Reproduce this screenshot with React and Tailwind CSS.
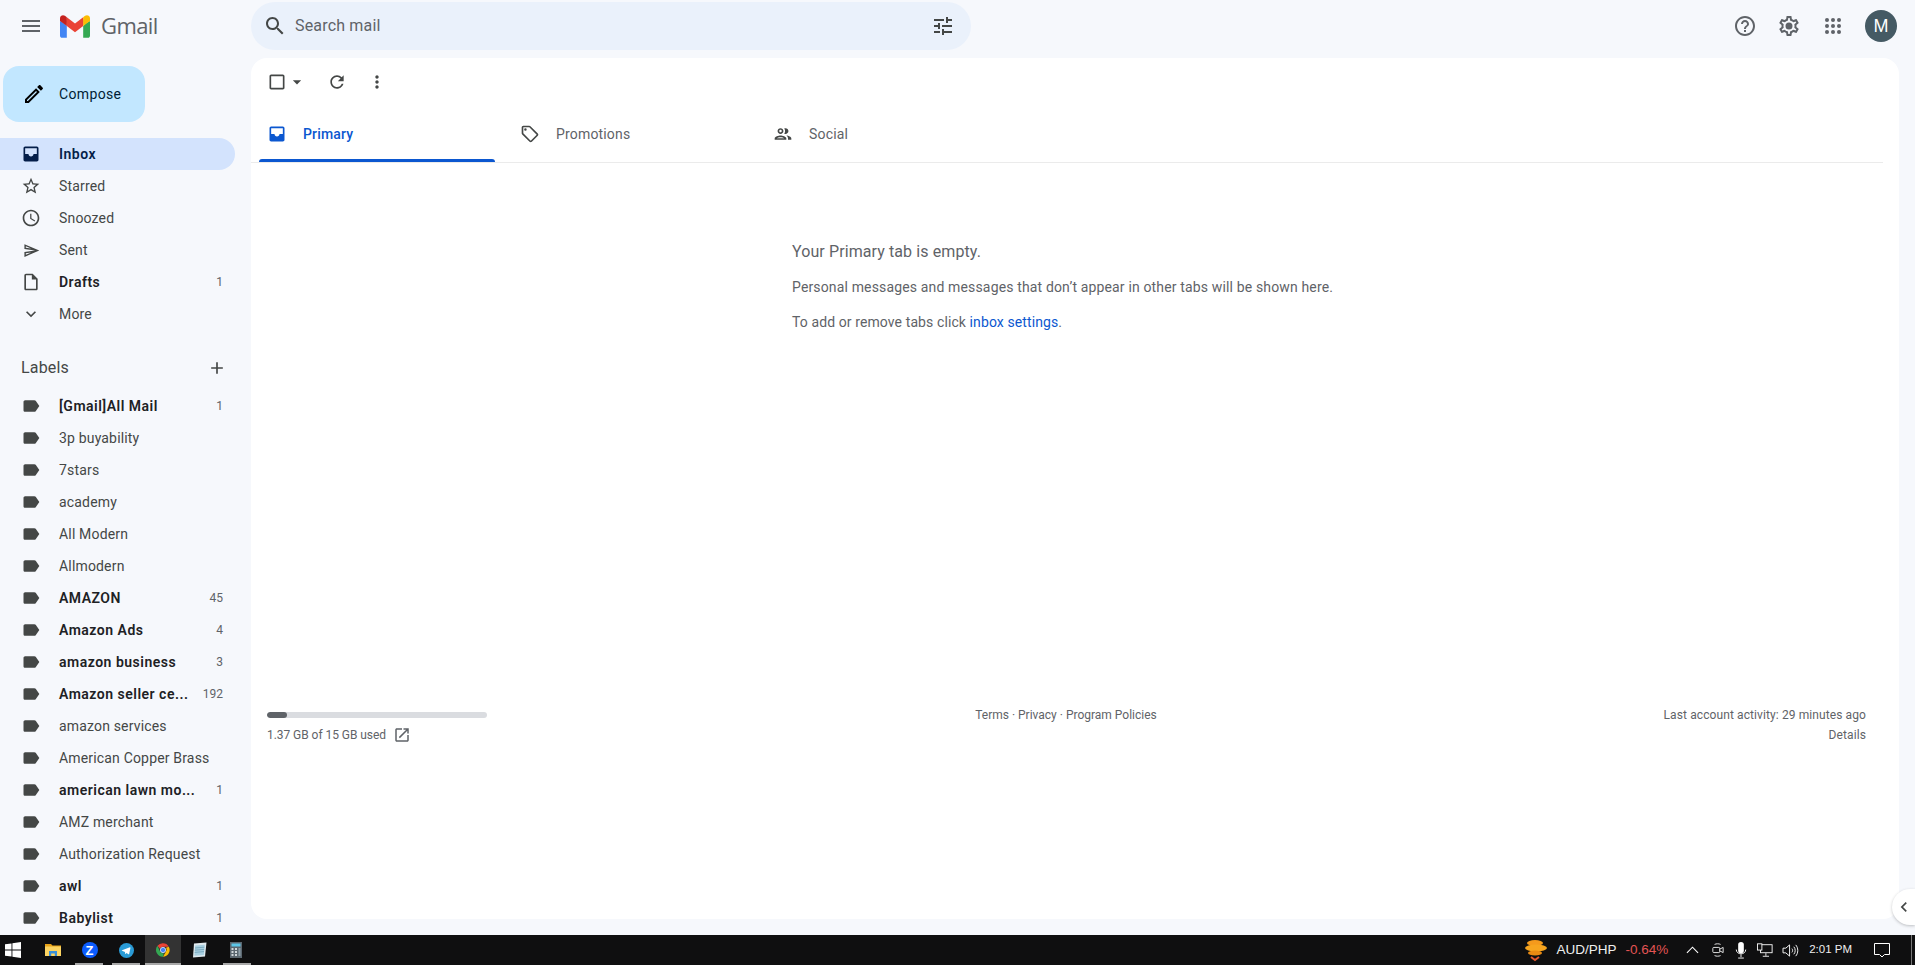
const paths = {
  menu: "M3 18h18v-2H3v2zm0-5h18v-2H3v2zm0-7v2h18V6H3z",
  search:
    "M15.5 14h-.79l-.28-.27C15.41 12.59 16 11.11 16 9.5 16 5.91 13.09 3 9.5 3S3 5.91 3 9.5 5.91 16 9.5 16c1.61 0 3.09-.59 4.23-1.57l.27.28v.79l5 4.99L20.49 19l-4.99-5zm-6 0C7.01 14 5 11.99 5 9.5S7.01 5 9.5 5 14 7.01 14 9.5 11.99 14 9.5 14z",
  tune: "M3 17v2h6v-2H3zM3 5v2h10V5H3zm10 16v-2h8v-2h-8v-2h-2v6h2zM7 9v2H3v2h4v2h2V9H7zm14 4v-2H11v2h10zm-6-4h2V7h4V5h-4V3h-2v6z",
  help: "M11 18h2v-2h-2v2zm1-16C6.48 2 2 6.48 2 12s4.48 10 10 10 10-4.48 10-10S17.52 2 12 2zm0 18c-4.41 0-8-3.59-8-8s3.59-8 8-8 8 3.59 8 8-3.59 8-8 8zm0-14c-2.21 0-4 1.79-4 4h2c0-1.1.9-2 2-2s2 .9 2 2c0 2-3 1.75-3 5h2c0-2.25 3-2.5 3-5 0-2.21-1.79-4-4-4z",
  gear: "M19.43 12.98c.04-.32.07-.64.07-.98 0-.34-.03-.66-.07-.98l2.11-1.65c.19-.15.24-.42.12-.64l-2-3.46c-.09-.16-.26-.25-.44-.25-.06 0-.12.01-.17.03l-2.49 1c-.52-.4-1.08-.73-1.69-.98l-.38-2.65C14.46 2.18 14.25 2 14 2h-4c-.25 0-.46.18-.49.42l-.38 2.65c-.61.25-1.17.59-1.69.98l-2.49-1c-.06-.02-.12-.03-.18-.03-.17 0-.34.09-.43.25l-2 3.46c-.13.22-.07.49.12.64l2.11 1.65c-.04.32-.07.65-.07.98 0 .33.03.66.07.98l-2.11 1.65c-.19.15-.24.42-.12.64l2 3.46c.09.16.26.25.44.25.06 0 .12-.01.17-.03l2.49-1c.52.4 1.08.73 1.69.98l.38 2.65c.03.24.24.42.49.42h4c.25 0 .46-.18.49-.42l.38-2.65c.61-.25 1.17-.59 1.69-.98l2.49 1c.06.02.12.03.18.03.17 0 .34-.09.43-.25l2-3.46c.12-.22.07-.49-.12-.64l-2.11-1.65zm-1.98-1.71c.04.31.05.52.05.73 0 .21-.02.43-.05.73l-.14 1.13.89.7 1.08.84-.7 1.21-1.27-.51-1.04-.42-.9.68c-.43.32-.84.56-1.25.73l-1.06.43-.16 1.13-.2 1.35h-1.4l-.19-1.35-.16-1.13-1.06-.43c-.43-.18-.83-.41-1.23-.71l-.91-.7-1.06.43-1.27.51-.7-1.21 1.08-.84.89-.7-.14-1.13c-.03-.31-.05-.54-.05-.74s.02-.43.05-.73l.14-1.13-.89-.7-1.08-.84.7-1.21 1.27.51 1.04.42.9-.68c.43-.32.84-.56 1.25-.73l1.06-.43.16-1.13.2-1.35h1.39l.19 1.35.16 1.13 1.06.43c.43.18.83.41 1.23.71l.91.7 1.06-.43 1.27-.51.7 1.21-1.07.85-.89.7.14 1.13zM12 8.5a3.5 3.5 0 1 0 0 7 3.5 3.5 0 0 0 0-7z",
  pen: "M14.06 9.02l.92.92L5.92 19H5v-.92l9.06-9.06M17.66 3c-.25 0-.51.1-.7.29l-1.83 1.83 3.75 3.75 1.83-1.83c.39-.39.39-1.02 0-1.41l-2.34-2.34c-.2-.2-.45-.29-.71-.29zm-3.6 3.19L3 17.25V21h3.75L17.81 9.94l-3.75-3.75z",
  inbox:
    "M19 3H4.99c-1.11 0-1.98.89-1.98 2L3 19c0 1.1.88 2 1.99 2H19c1.1 0 2-.9 2-2V5c0-1.11-.9-2-2-2zm0 9h-4c0 1.66-1.35 3-3 3s-3-1.34-3-3H4.99V5H19v7z",
  star: "M22 9.24l-7.19-.62L12 2 9.19 8.63 2 9.24l5.46 4.73L5.82 21 12 17.27 18.18 21l-1.63-7.03L22 9.24zM12 15.4l-3.76 2.27 1-4.28-3.32-2.88 4.38-.38L12 6.1l1.71 4.04 4.38.38-3.32 2.88 1 4.28L12 15.4z",
  clock:
    "M11.99 2C6.47 2 2 6.48 2 12s4.47 10 9.99 10C17.52 22 22 17.52 22 12S17.52 2 11.99 2zM12 20c-4.42 0-8-3.58-8-8s3.58-8 8-8 8 3.58 8 8-3.58 8-8 8zm.5-13H11v6l5.25 3.15.75-1.23-4.5-2.67z",
  send: "M4.01 6.03l7.51 3.22-7.52-1 .01-2.22m7.5 8.72L4 17.97v-2.22l7.51-1M2.01 3L2 10l15 2-15 2 .01 7L23 12 2.01 3z",
  draft:
    "M14 2H6c-1.1 0-1.99.9-1.99 2L4 20c0 1.1.89 2 1.99 2H18c1.1 0 2-.9 2-2V8l-6-6zM6 20V4h7v5h5v11H6z",
  more: "M16.59 8.59L12 13.17 7.41 8.59 6 10l6 6 6-6z",
  add: "M19 13h-6v6h-2v-6H5v-2h6V5h2v6h6v2z",
  label:
    "M17.63 5.84C17.27 5.33 16.67 5 16 5L5 5.01C3.9 5.01 3 5.9 3 7v10c0 1.1.9 1.99 2 1.99L16 19c.67 0 1.27-.33 1.63-.84L22 12l-4.37-6.16z",
  check:
    "M19 5v14H5V5h14m0-2H5c-1.1 0-2 .9-2 2v14c0 1.1.9 2 2 2h14c1.1 0 2-.9 2-2V5c0-1.1-.9-2-2-2z",
  caret: "M7 10l5 5 5-5z",
  refresh:
    "M17.65 6.35C16.2 4.9 14.21 4 12 4c-4.42 0-7.99 3.58-7.99 8s3.57 8 7.99 8c3.73 0 6.84-2.55 7.73-6h-2.08c-.82 2.33-3.04 4-5.65 4-3.31 0-6-2.69-6-6s2.69-6 6-6c1.66 0 3.14.69 4.22 1.78L13 11h7V4l-2.35 2.35z",
  dots: "M12 8c1.1 0 2-.9 2-2s-.9-2-2-2-2 .9-2 2 .9 2 2 2zm0 2c-1.1 0-2 .9-2 2s.9 2 2 2 2-.9 2-2-.9-2-2-2zm0 6c-1.1 0-2 .9-2 2s.9 2 2 2 2-.9 2-2-.9-2-2-2z",
  tag: "M21.41 11.41l-8.83-8.83c-.37-.37-.88-.58-1.41-.58H4c-1.1 0-2 .9-2 2v7.17c0 .53.21 1.04.59 1.41l8.83 8.83c.78.78 2.05.78 2.83 0l7.17-7.17c.78-.79.78-2.05-.01-2.83zM12.83 20L4 11.17V4h7.17L20 12.83 12.83 20zM6.5 5a1.5 1.5 0 1 0 0 3 1.5 1.5 0 0 0 0-3z",
  people:
    "M9 13.75c-2.34 0-7 1.17-7 3.5V19h14v-1.75c0-2.33-4.66-3.5-7-3.5zM4.34 17c.84-.58 2.87-1.25 4.66-1.25s3.82.67 4.66 1.25H4.34zM9 12c1.93 0 3.5-1.57 3.5-3.5S10.93 5 9 5 5.5 6.57 5.5 8.5 7.07 12 9 12zm0-5c.83 0 1.5.67 1.5 1.5S9.83 10 9 10s-1.5-.67-1.5-1.5S8.17 7 9 7zm7.04 6.81c1.16.84 1.96 1.96 1.96 3.44V19h4v-1.75c0-2.02-3.5-3.17-5.96-3.44zM15 12c1.93 0 3.5-1.57 3.5-3.5S16.93 5 15 5c-.54 0-1.04.13-1.5.35.63.89 1 1.98 1 3.15s-.37 2.26-1 3.15c.46.22.96.35 1.5.35z",
  external:
    "M19 19H5V5h7V3H5c-1.11 0-2 .9-2 2v14c0 1.1.89 2 2 2h14c1.1 0 2-.9 2-2v-7h-2v7zM14 3v2h3.59l-9.83 9.83 1.41 1.41L19 6.41V10h2V3h-7z",
  chevronLeft: "M15.41 7.41L14 6l-6 6 6 6 1.41-1.41L10.83 12z",
};

const Icon = ({ name, className }) => (
  <svg viewBox="0 0 24 24" className={`fill-current shrink-0 ${className}`}>
    <path d={paths[name]} />
  </svg>
);

const GmailLogo = () => (
  <svg viewBox="0 0 256 193" className="w-[30px] h-[23px] shrink-0">
    <path fill="#4285F4" d="M58.182 192.05V93.14L27.507 65.077 0 49.504v125.091c0 9.658 7.825 17.455 17.455 17.455h40.727Z" />
    <path fill="#34A853" d="M197.818 192.05h40.727c9.659 0 17.455-7.826 17.455-17.455V49.505l-31.156 17.837-27.026 25.798v98.91Z" />
    <path fill="#EA4335" d="m58.182 93.14-4.174-38.647 4.174-36.989L128 69.868l69.818-52.364 4.669 34.992-4.669 40.644L128 145.504z" />
    <path fill="#FBBC04" d="M197.818 17.504V93.14L256 49.504V26.231c0-21.585-24.64-33.89-41.89-20.945l-16.292 12.218Z" />
    <path fill="#C5221F" d="m0 49.504 26.759 20.07L58.182 93.14V17.504L41.89 5.286C24.61-7.66 0 4.646 0 26.23v23.273Z" />
  </svg>
);

const mainNav = [
  { icon: "inbox", text: "Inbox", active: true },
  { icon: "star", text: "Starred" },
  { icon: "clock", text: "Snoozed" },
  { icon: "send", text: "Sent" },
  { icon: "draft", text: "Drafts", count: "1", bold: true },
  { icon: "more", text: "More" },
];

const labels = [
  { text: "[Gmail]All Mail", count: "1", bold: true },
  { text: "3p buyability" },
  { text: "7stars" },
  { text: "academy" },
  { text: "All Modern" },
  { text: "Allmodern" },
  { text: "AMAZON", count: "45", bold: true },
  { text: "Amazon Ads", count: "4", bold: true },
  { text: "amazon business", count: "3", bold: true },
  { text: "Amazon seller ce...", count: "192", bold: true },
  { text: "amazon services" },
  { text: "American Copper Brass" },
  { text: "american lawn mo...", count: "1", bold: true },
  { text: "AMZ merchant" },
  { text: "Authorization Request" },
  { text: "awl", count: "1", bold: true },
  { text: "Babylist", count: "1", bold: true },
];

const NavRow = ({ icon, text, count, bold, active }) => (
  <div
    className={`flex items-center h-8 w-[235px] rounded-r-full pl-[21px] pr-3 text-sm ${
      active
        ? "bg-[#d3e3fd] text-[#041e49] font-semibold tracking-[0.5px]"
        : bold
          ? "text-[#202124] font-semibold tracking-[0.5px]"
          : "text-[#444746]"
    }`}
  >
    <Icon
      name={icon}
      className={`${icon === "send" ? "w-[17px] h-[17px] mx-[1.5px]" : "w-5 h-5"} ${active ? "text-[#041e49]" : "text-[#444746]"}`}
    />
    <span className="ml-[18px] whitespace-nowrap flex-1">{text}</span>
    {count && <span className="ml-3 text-xs font-normal tracking-normal text-[#5f6368]">{count}</span>}
  </div>
);

const Sidebar = () => (
  <aside className="w-[251px] shrink-0 overflow-hidden pt-2">
    <button className="ml-[3px] flex items-center w-[142px] h-14 rounded-2xl bg-[#c2e7ff] pl-[19px] text-sm font-normal tracking-[0.35px] text-[#001d35]">
      <Icon name="pen" className="w-6 h-6 text-black" />
      <span className="ml-[13px]">Compose</span>
    </button>
    <nav className="mt-4">
      {mainNav.map((n) => (
        <NavRow key={n.text} {...n} />
      ))}
    </nav>
    <div className="flex items-center justify-between w-[235px] h-9 mt-5 pl-[21px] pr-[8px] text-base text-[#444746]">
      <span>Labels</span>
      <Icon name="add" className="w-[20px] h-[20px]" />
    </div>
    <div className="mt-1">
      {labels.map((l) => (
        <NavRow key={l.text} icon="label" {...l} />
      ))}
    </div>
  </aside>
);

const Header = () => (
  <header className="flex items-start h-[58px] shrink-0 pt-[2px]">
    <div className="w-[251px] shrink-0 flex items-center h-12 pl-[19px]">
      <Icon name="menu" className="w-6 h-6 text-[#5f6368]" />
      <div className="ml-[17px]">
        <GmailLogo />
      </div>
      <span className="ml-[11px] mb-[2px] text-[22px] text-[#5f6368] font-['Open_Sans',sans-serif] tracking-[-0.6px]">Gmail</span>
    </div>
    <div className="flex items-center w-[720px] h-12 rounded-full bg-[#eaf1fb] pl-3 pr-[16px]">
      <Icon name="search" className="w-6 h-6 text-[#444746]" />
      <span className="ml-[8px] flex-1 text-base text-[#5f6368]">Search mail</span>
      <Icon name="tune" className="w-6 h-6 text-[#444746]" />
    </div>
    <div className="ml-auto flex items-center h-12 pr-[18px] text-[#5f6368]">
      <Icon name="help" className="w-6 h-6" />
      <Icon name="gear" className="w-6 h-6 ml-5" />
      <svg viewBox="0 0 24 24" className="w-6 h-6 ml-5 fill-current">
        {[6, 12, 18].map((y) =>
          [6, 12, 18].map((x) => <circle key={`${x}-${y}`} cx={x} cy={y} r="2" />)
        )}
      </svg>
      <div className="w-8 h-8 ml-[20px] rounded-full bg-[#455a64] text-white text-lg flex items-center justify-center font-['Liberation_Sans',sans-serif]">
        M
      </div>
    </div>
  </header>
);

const Tab = ({ icon, text, active }) => (
  <div className={`relative flex items-center w-[253px] h-14 pl-[8px] text-sm ${active ? "font-medium text-[#0b57d0]" : "text-[#5f6368]"}`}>
    <Icon name={icon} className={`w-[20px] h-[20px] ${active ? "text-[#0b57d0]" : "text-[#444746]"}`} />
    <span className="ml-[16px]">{text}</span>
    {active && <div className="absolute left-0 bottom-0 w-[236px] h-[3px] rounded-t bg-[#0b57d0]" />}
  </div>
);

const Main = () => (
  <main className="flex-1 mb-4 mr-4 bg-white rounded-2xl overflow-hidden text-[#5f6368]">
    {/* toolbar */}
    <div className="flex items-center h-12 pl-4">
      <Icon name="check" className="w-5 h-5 text-[#444746]" />
      <Icon name="caret" className="w-5 h-5 text-[#444746]" />
      <Icon name="refresh" className="w-5 h-5 ml-[20px] text-[#444746]" />
      <Icon name="dots" className="w-5 h-5 ml-5 text-[#444746]" />
    </div>
    {/* tabs */}
    <div className="flex pl-2 mr-4 border-b border-[#ebebeb]">
      <Tab icon="inbox" text="Primary" active />
      <Tab icon="tag" text="Promotions" />
      <Tab icon="people" text="Social" />
    </div>
    {/* empty state */}
    <div className="pl-[541px] pt-[79px] text-sm tracking-[0.15px]">
      <p className="text-base leading-5 tracking-[0.1px]">Your Primary tab is empty.</p>
      <p className="mt-[15px] leading-5">Personal messages and messages that don’t appear in other tabs will be shown here.</p>
      <p className="mt-[15px] leading-5 tracking-[0.1px]">
        To add or remove tabs click <span className="text-[#0b57d0]">inbox settings</span>.
      </p>
    </div>
    {/* footer */}
    <div className="grid grid-cols-[220px_1fr_204px] ml-4 mr-[33px] mt-[380px] text-xs">
      <div>
        <div className="h-[6px] rounded-full bg-[#dadce0] overflow-hidden">
          <div className="h-full w-[20px] rounded-full bg-[#5f6368]" />
        </div>
        <div className="flex items-center mt-[7px] h-5 tracking-[-0.05px]">
          <span>1.37 GB of 15 GB used</span>
          <Icon name="external" className="w-[18px] h-[18px] ml-[7px]" />
        </div>
      </div>
      <div className="text-center pr-[17px] -mt-[7px] leading-5 tracking-normal">Terms · Privacy · Program Policies</div>
      <div className="text-right -mt-[7px] leading-5 whitespace-nowrap tracking-[0.1px]">
        <div>Last account activity: 29 minutes ago</div>
        <div>Details</div>
      </div>
    </div>
  </main>
);

const WinLogo = () => (
  <svg viewBox="0 0 16 16" className="w-4 h-4 fill-white">
    <path d="M0 2.3 6.5 1.4V7.6H0zM7.4 1.3 16 0V7.6H7.4zM0 8.4H6.5V14.6L0 13.7zM7.4 8.4H16V16L7.4 14.7z" />
  </svg>
);

const FolderIcon = () => (
  <svg viewBox="0 0 16 16" className="w-4 h-4">
    <path fill="#e8a318" d="M0 2h6l1.5 1.5H16V5H0z" />
    <path fill="#fcd462" d="M0 4.5h16V14H0z" />
    <path fill="#3a8fd8" d="M4 9h8v5H9.8v-2.5H6.2V14H4z" />
  </svg>
);

const TelegramIcon = () => (
  <svg viewBox="0 0 16 16" className="w-[15px] h-[15px]">
    <circle cx="8" cy="8" r="8" fill="#2a9bd6" />
    <path fill="#fff" d="M3.2 7.8 11.6 4.6c.4-.1.7.1.6.6l-1.4 6.6c-.1.4-.4.5-.7.3L8 10.6l-1 1c-.2.2-.4.1-.4-.1l-.2-1.9L3.2 8.3c-.3-.2-.3-.4 0-.5z" />
  </svg>
);

const ChromeIcon = () => (
  <svg viewBox="0 0 48 48" className="w-4 h-4">
    <path fill="#ea4335" d="M24 4a20 20 0 0 1 17.3 10H24a10 10 0 0 0-9.3 6.3L7.5 11.5A20 20 0 0 1 24 4z" />
    <path fill="#fbbc04" d="M41.3 14A20 20 0 0 1 24 44l8.6-15A10 10 0 0 0 33 17z" />
    <path fill="#34a853" d="M7.5 11.5 15.4 29a10 10 0 0 0 11 4.7L24 44A20 20 0 0 1 7.5 11.5z" />
    <circle cx="24" cy="24" r="8" fill="#4285f4" stroke="#fff" strokeWidth="2" />
  </svg>
);

const NotepadIcon = () => (
  <svg viewBox="0 0 16 16" className="w-4 h-4">
    <path fill="#dfe9ee" d="M2 1.5 14.5 0.5 13 14.5 1 15.5z" />
    <path fill="#a8cfe0" d="M3.2 3.5 12.8 2.7 11.8 13 2.4 13.8z" />
    <path stroke="#5a8ea6" strokeWidth="0.6" d="M3 6l9.4-.8M2.8 8.2l9.4-.8M2.6 10.4l9.4-.8" />
  </svg>
);

const CalcIcon = () => (
  <svg viewBox="0 0 16 16" className="w-4 h-4">
    <path fill="#5b6770" d="M2 0h12v16H2z" />
    <path fill="#5cc6e8" d="M3.5 1.5h9v3h-9z" />
    <path fill="#cfd6da" d="M3.5 6h2v2h-2zM7 6h2v2H7zM3.5 9h2v2h-2zM7 9h2v2H7zM3.5 12h2v2h-2zM7 12h2v2H7z" />
    <path fill="#8fa0aa" d="M10.5 6h2v8h-2z" />
  </svg>
);

const TaskItem = ({ children, className }) => <div className={`relative flex items-center justify-center h-full ${className}`}>{children}</div>;

const Underline = ({ className }) => <div className={`absolute bottom-0 h-[2px] bg-[#a8a8a8] ${className}`} />;

const Taskbar = () => (
  <footer className="flex items-center h-[30px] shrink-0 bg-[#0f0f10] text-white tracking-normal font-['Liberation_Sans',sans-serif]">
    <div className="flex h-full">
      <TaskItem className="w-[34px] pr-[8px]">
        <WinLogo />
      </TaskItem>
      <TaskItem className="w-[37px]">
        <FolderIcon />
      </TaskItem>
      <TaskItem className="w-[37px]">
        <div className="w-4 h-4 rounded-full bg-[#0b5cff] flex items-center justify-center text-white text-[13px] font-bold leading-none">Z</div>
        <Underline className="left-[4px] w-[28px]" />
      </TaskItem>
      <TaskItem className="w-[37px]">
        <TelegramIcon />
        <Underline className="left-[4px] w-[28px]" />
      </TaskItem>
      <TaskItem className="w-[36px] bg-[#333333]">
        <ChromeIcon />
        <Underline className="left-0 w-full" />
      </TaskItem>
      <TaskItem className="w-[37px]">
        <NotepadIcon />
      </TaskItem>
      <TaskItem className="w-[36px]">
        <CalcIcon />
        <Underline className="left-[5px] w-[28px]" />
      </TaskItem>
    </div>
    <div className="ml-auto flex items-center h-full pr-[3px]">
      <svg viewBox="0 0 24 24" className="w-[24px] h-[24px]">
        <ellipse cx="11" cy="5" rx="8" ry="3" fill="#f59a1c" />
        <ellipse cx="12" cy="10" rx="11" ry="3.5" fill="#f7a51f" />
        <ellipse cx="11" cy="15" rx="7" ry="2.5" fill="#e98a12" />
        <path d="M7 19l4 3 4-3" fill="none" stroke="#e4572e" strokeWidth="2" />
      </svg>
      <span className="ml-[8px] text-[13.5px] text-[#eeeeee] whitespace-nowrap">AUD/PHP</span>
      <span className="ml-[9px] text-[13.5px] text-[#e35454] whitespace-nowrap">-0.64%</span>
      <svg viewBox="0 0 14 8" className="ml-[18px] w-[13px] h-[8px] fill-none stroke-white">
        <path d="M1 7l6-6 6 6" strokeWidth="1.2" />
      </svg>
      <svg viewBox="0 0 14 18" className="ml-[13px] w-[12px] h-[16px] fill-none stroke-white">
        <rect x="1" y="6" width="8" height="6" rx="1" />
        <path d="M9 8l4-2v6l-4-2M3 2.500c2-1 5-1 7 0M3 15.500c2 1 5 1 7 0" />
      </svg>
      <svg viewBox="0 0 12 18" className="ml-[11px] w-[12px] h-[17px] fill-white">
        <rect x="3" y="0" width="6" height="12" rx="3" />
        <path d="M1 8c0 6 10 6 10 0M6 13v3M3 17h6" fill="none" stroke="white" />
      </svg>
      <svg viewBox="0 0 18 16" className="ml-[10px] w-[16px] h-[15px] fill-none stroke-white">
        <rect x="4" y="1.500" width="13" height="9" />
        <rect x="0.500" y="0.500" width="5" height="7" fill="#0f0f10" />
        <path d="M10 11v3M6.500 14.500h7" />
      </svg>
      <svg viewBox="0 0 18 16" className="ml-[9px] w-[17px] h-[15px] fill-none stroke-white">
        <path d="M1 5.500h3L8 2v12l-4-3.500H1zM10.500 6c1 1 1 3 0 4M12.500 4c2 2 2 6 0 8M14.500 2c3 3 3 9 0 12" />
      </svg>
      <span className="ml-[10px] text-[11.5px] text-[#eeeeee] whitespace-nowrap">2:01 PM</span>
      <svg viewBox="0 0 16 15" className="ml-[22px] w-[16px] h-[15px] fill-none stroke-white">
        <path d="M.5.500h15v11h-5l-2.500 2.500L5.500 11.500h-5z" />
      </svg>
      <div className="ml-[21px] w-[1px] h-full bg-[#777777]" />
    </div>
  </footer>
);

const App = () => {
  return (
    <div className="relative flex flex-col h-screen overflow-hidden bg-[#f6f8fc] tracking-[0.17px] font-['Roboto',sans-serif]">
      <Header />
      <div className="flex flex-1 min-h-0">
        <Sidebar />
        <Main />
      </div>
      <Taskbar />
      {/* side panel toggle */}
      <div className="absolute right-0 top-[889px] flex items-center justify-center w-[23px] h-[36px] rounded-l-full bg-white shadow-[0_1px_3px_rgba(60,64,67,0.3)]">
        <Icon name="chevronLeft" className="w-5 h-5 text-[#444746]" />
      </div>
    </div>
  );
};

export default App;
